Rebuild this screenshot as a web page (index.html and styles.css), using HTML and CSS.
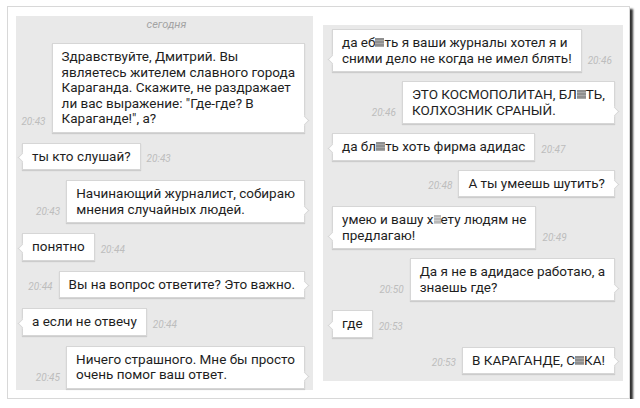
FILE: index.html
```html
<!DOCTYPE html>
<html lang="ru">

<head>
  <meta charset="UTF-8">
  <meta name="viewport" content="width=device-width, initial-scale=1.0">
  <title>Караганда</title>
  <link rel="stylesheet" href="styles.css">
</head>

<body>
  <div class="card">
    <!-- left screenshot -->
    <div class="chat chat-left">
      <div class="day">сегодня</div>
      <div class="row out">
        <span class="time">20:43</span>
        <div class="bubble">Здравствуйте, Дмитрий. Вы<br>являетесь жителем славного города<br>Караганда. Скажите, не раздражает<br>ли вас выражение: "Где-где? В<br>Караганде!", а?</div>
      </div>
      <div class="row in">
        <div class="bubble">ты кто слушай?</div>
        <span class="time">20:43</span>
      </div>
      <div class="row out">
        <span class="time">20:43</span>
        <div class="bubble">Начинающий журналист, собираю<br>мнения случайных людей.</div>
      </div>
      <div class="row in">
        <div class="bubble">понятно</div>
        <span class="time">20:44</span>
      </div>
      <div class="row out">
        <span class="time">20:44</span>
        <div class="bubble">Вы на вопрос ответите? Это важно.</div>
      </div>
      <div class="row in">
        <div class="bubble">а если не отвечу</div>
        <span class="time">20:44</span>
      </div>
      <div class="row out">
        <span class="time">20:45</span>
        <div class="bubble">Ничего страшного. Мне бы просто<br>очень помог ваш ответ.</div>
      </div>
    </div>

    <!-- right screenshot -->
    <div class="chat chat-right">
      <div class="row in">
        <div class="bubble">да еб<span class="censor"></span>ть я ваши журналы хотел я и<br>сними дело не когда не имел блять!</div>
        <span class="time">20:46</span>
      </div>
      <div class="row out">
        <span class="time">20:46</span>
        <div class="bubble">ЭТО КОСМОПОЛИТАН, БЛ<span class="censor"></span>ТЬ,<br>КОЛХОЗНИК СРАНЫЙ.</div>
      </div>
      <div class="row in">
        <div class="bubble">да бл<span class="censor"></span>ть хоть фирма адидас</div>
        <span class="time">20:47</span>
      </div>
      <div class="row out">
        <span class="time">20:48</span>
        <div class="bubble">А ты умеешь шутить?</div>
      </div>
      <div class="row in">
        <div class="bubble">умею и вашу х<span class="censor light"></span>ету людям не<br>предлагаю!</div>
        <span class="time">20:49</span>
      </div>
      <div class="row out">
        <span class="time">20:50</span>
        <div class="bubble">Да я не в адидасе работаю, а<br>знаешь где?</div>
      </div>
      <div class="row in">
        <div class="bubble">где</div>
        <span class="time">20:53</span>
      </div>
      <div class="row out">
        <span class="time">20:53</span>
        <div class="bubble">В КАРАГАНДЕ, С<span class="censor"></span>КА!</div>
      </div>
    </div>
  </div>
</body>

</html>
```

FILE: styles.css
```css
body {
  margin: 0;
  background-color: #fff;
  font-family: Roboto, "Liberation Sans", Arial, sans-serif;
}

.card {
  display: flex;
  align-items: flex-start;
  gap: 10px;
  width: 607px;
  height: 374px;
  margin: 6px 0 0 7px;
  padding: 9px 6px 8px 8px;
  background: #fff;
  border: 1px solid #d8d8d8;
  box-shadow: 3px 3px 2px #333;
}

.chat {
  display: flex;
  flex-direction: column;
  box-sizing: border-box;
  background-color: #e9e9e9;
}

.chat-left {
  width: 297px;
  height: 374px;
  padding-top: 2px;
  gap: 10px;
}

.chat-right {
  width: 300px;
  height: 356px;
  margin-top: 9px;
  padding-top: 4px;
  gap: 9px;
}

.day {
  text-align: center;
  font-size: 11px;
  line-height: 14px;
  font-style: italic;
  color: #a3a3a3;
  margin-bottom: 1px;
  padding-left: 4px;
}

.row {
  display: flex;
  align-items: flex-end;
  gap: 6px;
}

.row.out {
  justify-content: flex-end;
  padding-right: 8px;
}

.chat-left .row.in {
  padding-left: 6px;
}

.chat-right .row.in {
  padding-left: 9px;
}

.bubble {
  position: relative;
  padding: 5px 9px;
  background: #fff;
  border: 1px solid #d6d6d6;
  box-shadow: 0 1px 1px rgba(0, 0, 0, 0.12);
  font-size: 13.5px;
  line-height: 15.5px;
  color: #1e1e1e;
  white-space: nowrap;
}

/* little tail of the bubble */
.bubble::after {
  content: "";
  position: absolute;
  bottom: 8px;
  width: 6px;
  height: 6px;
  background: #fff;
  border: 1px solid #d6d6d6;
  transform: rotate(45deg);
}

.out .bubble::after {
  right: -4px;
  border-left: none;
  border-bottom: none;
}

.in .bubble::after {
  left: -4px;
  border-right: none;
  border-top: none;
}

.time {
  font-size: 10px;
  line-height: 12px;
  font-style: italic;
  color: #bdbdbd;
  margin-bottom: 5px;
}

.censor {
  display: inline-block;
  width: 9px;
  height: 9px;
  background: repeating-linear-gradient(#8f8f8f 0 2px, #a8a8a8 2px 3px);
  vertical-align: 0;
}

.censor.light {
  width: 7px;
  background: repeating-linear-gradient(#b8b8b8 0 2px, #cfcfcf 2px 3px);
}
```
